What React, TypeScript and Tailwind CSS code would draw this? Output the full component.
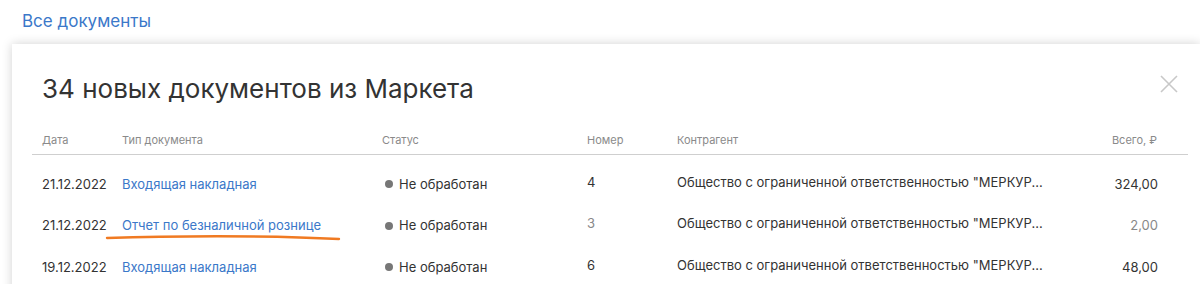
import React from 'react'

const rows = [
  { date: '21.12.2022', type: 'Входящая накладная', status: 'Не обработан', num: '4', agent: 'Общество с ограниченной ответственностью "МЕРКУР...', sum: '324,00', dim: false },
  { date: '21.12.2022', type: 'Отчет по безналичной рознице', status: 'Не обработан', num: '3', agent: 'Общество с ограниченной ответственностью "МЕРКУР...', sum: '2,00', dim: true },
  { date: '19.12.2022', type: 'Входящая накладная', status: 'Не обработан', num: '6', agent: 'Общество с ограниченной ответственностью "МЕРКУР...', sum: '48,00', dim: false },
]

const cols = 'grid grid-cols-[90px_260px_205px_90px_1fr_120px]'

export default function App() {
  return (
    <div className="w-[1200px] h-[284px] overflow-hidden bg-white font-['Inter',sans-serif] text-[#333]">
      <div className="pl-[22px] pt-[9px] h-[44px]">
        <a className="text-[17px] text-[#3b78c9]">Все документы</a>
      </div>
      <div className="relative ml-[12px] bg-white shadow-[0_0_10px_rgba(0,0,0,0.18)] h-[260px]">
        <div className="flex items-start justify-between pl-[30px] pr-[22px] pt-[27px]">
          <h1 className="text-[26px] leading-[36px] text-[#333]">34 новых документов из Маркета</h1>
          <svg width="18" height="18" viewBox="0 0 18 18" className="mt-[4px]">
            <path d="M1 1 L17 17 M17 1 L1 17" stroke="#c8c8c8" strokeWidth="1.6" />
          </svg>
        </div>
        <div className="ml-[20px] mr-[12px] mt-[25px]">
          <div className={`${cols} border-b border-[#cfcfcf] pb-[5px] text-[11px] text-[#8a8a8a]`}>
            <div className="pl-[10px]">Дата</div>
            <div>Тип документа</div>
            <div>Статус</div>
            <div>Номер</div>
            <div>Контрагент</div>
            <div className="text-right pr-[31px]">Всего, ₽</div>
          </div>
          <div className="pt-[9px]">
            {rows.map((r, i) => (
              <div key={i} className={`${cols} h-[41.5px] items-center text-[13px]`}>
                <div className="pl-[10px] text-[#333]">{r.date}</div>
                <div className="text-[#3b78c9]">{r.type}</div>
                <div className="flex items-center gap-[6px] pl-[3px] text-[#333]">
                  <span className="w-[8px] h-[8px] rounded-full bg-[#777]" />
                  {r.status}
                </div>
                <div className={`-mt-[4px] ${r.dim ? 'text-[#888]' : 'text-[#333]'}`}>{r.num}</div>
                <div className="-mt-[4px] text-[#333] whitespace-nowrap">{r.agent}</div>
                <div className={`text-right pr-[30px] ${r.dim ? 'text-[#888]' : 'text-[#333]'}`}>{r.sum}</div>
              </div>
            ))}
          </div>
        </div>
        <svg className="absolute left-[93px] top-[189px]" width="240" height="10" viewBox="0 0 240 10">
          <path d="M2 5 C 60 3, 160 2, 234 6" stroke="#f07a22" strokeWidth="2.4" fill="none" strokeLinecap="round" />
        </svg>
      </div>
    </div>
  )
}
